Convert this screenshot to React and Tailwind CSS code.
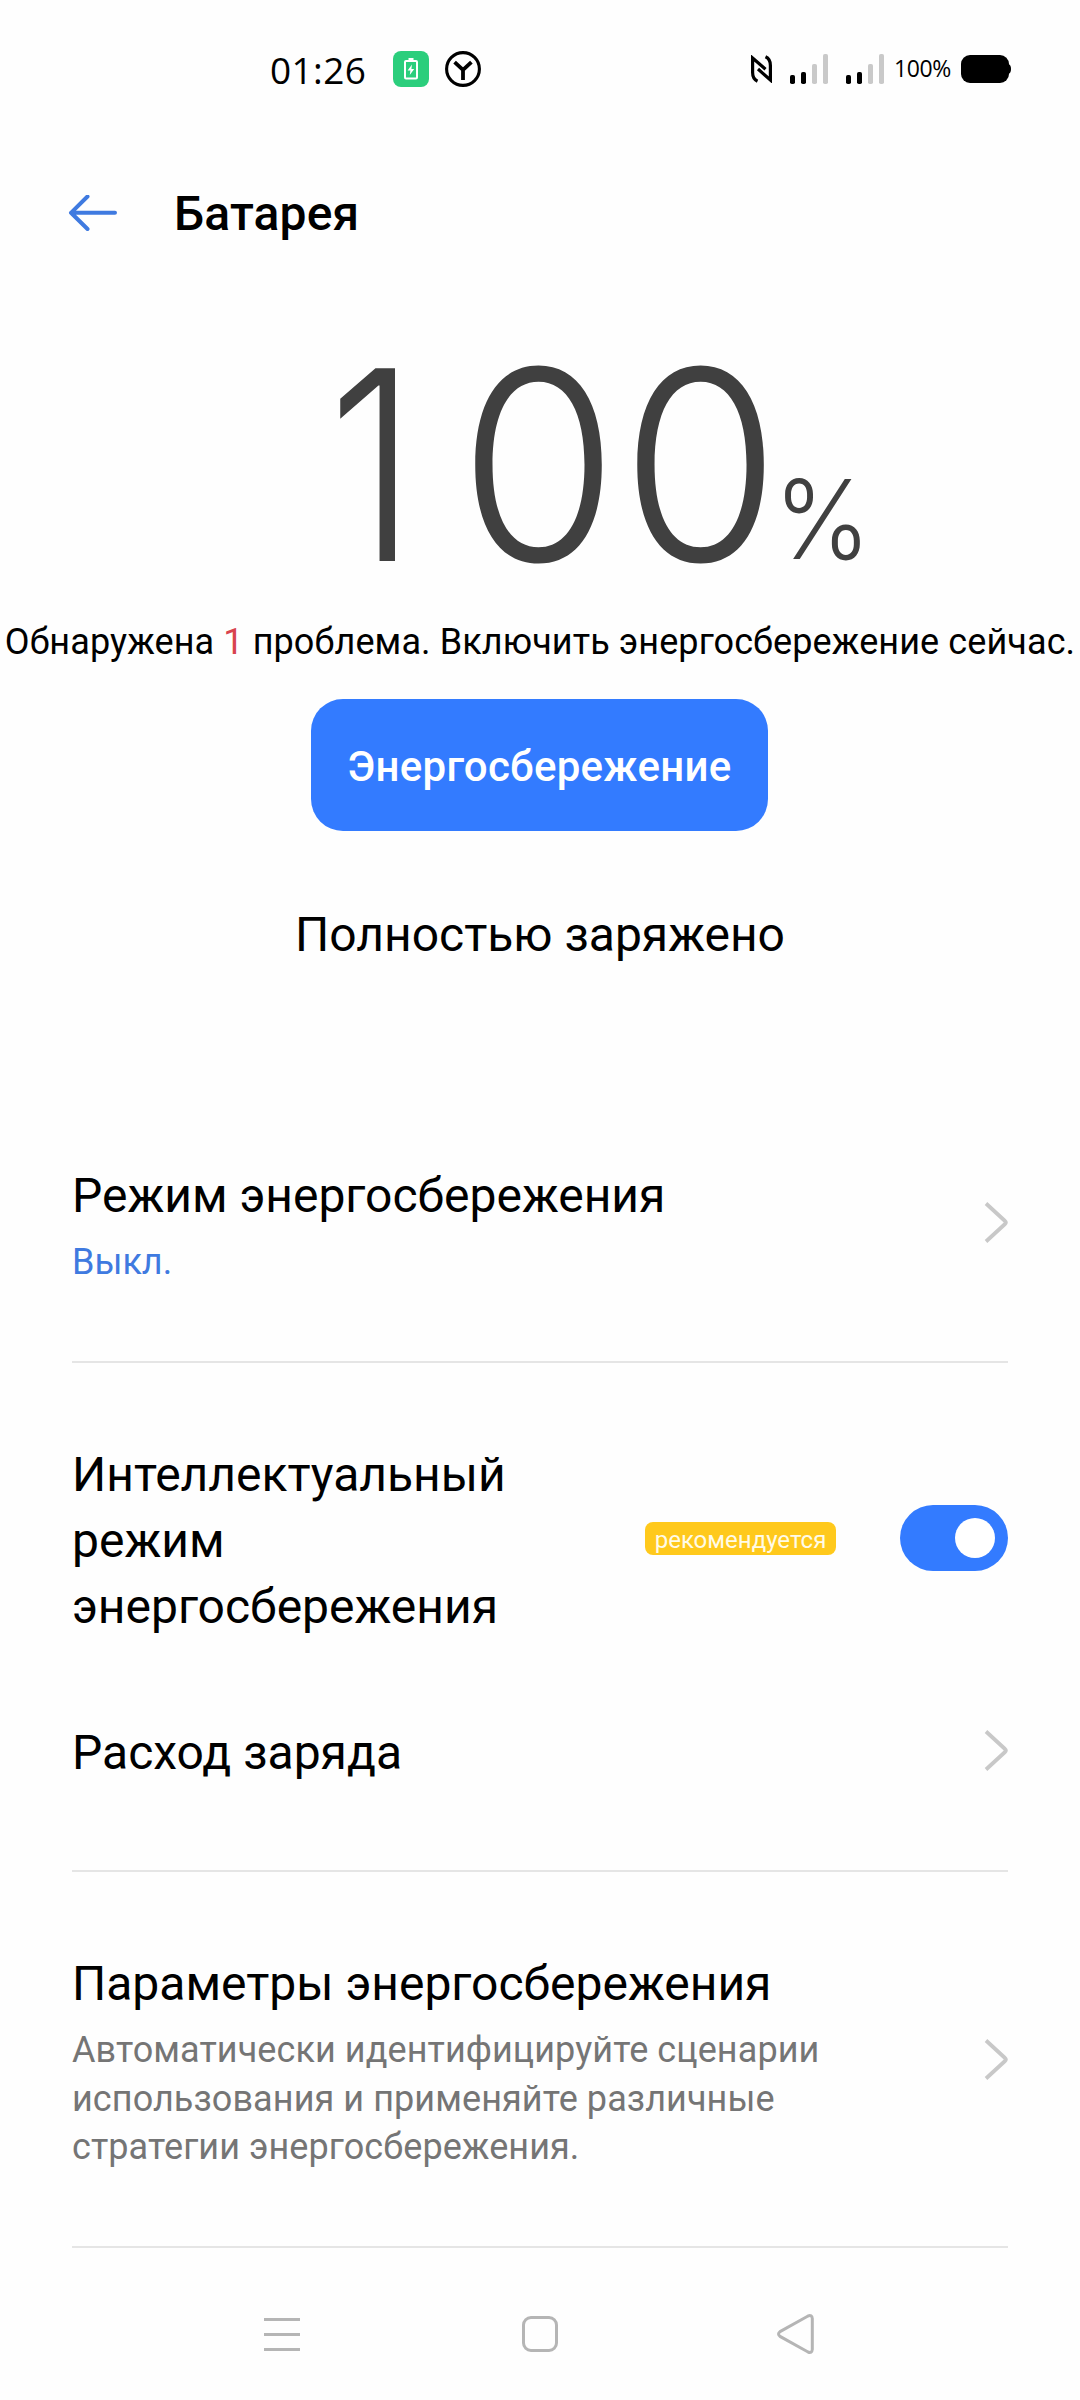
import { useState } from "react";

const SignalBars = () => (
  <svg width="38" height="30" viewBox="0 0 38 30">
    <rect x="0" y="21" width="5" height="9" rx="1.8" fill="#000" />
    <rect x="11" y="18" width="5" height="12" rx="1.8" fill="#000" />
    <rect x="22" y="10" width="5" height="20" rx="1.8" fill="#c9c9c9" />
    <rect x="33" y="0" width="5" height="30" rx="1.8" fill="#c9c9c9" />
  </svg>
);

const Chevron = () => (
  <svg className="mb-1 shrink-0" width="24" height="42" viewBox="0 0 24 42" fill="none">
    <path d="M2 1.500 L21 19 Q22.800 20.500 21 22 L2 39.500" stroke="#c8c8c8" strokeWidth="3.8" />
  </svg>
);

const StatusBar = () => (
  <div className="flex h-[138px] items-center pl-[270px] pr-[69px]">
    <span className="w-[123px] pt-0.5 font-['Open_Sans',sans-serif] text-[37px] leading-[48px] tracking-[0.4px]">
      01:26
    </span>
    <div className="flex items-center gap-4">
      <svg width="36" height="36" viewBox="0 0 36 36">
        <rect width="36" height="36" rx="8" fill="#2bce7c" />
        <rect x="15.5" y="7" width="5" height="4" fill="#fff" />
        <rect x="12" y="10" width="12" height="17.500" rx="1" fill="none" stroke="#fff" strokeWidth="2" />
        <path d="M19 13.5 L14.6 19.6 H17.4 L16.8 24 L21.2 18 H18.4 Z" fill="#fff" />
      </svg>
      <svg width="36" height="36" viewBox="0 0 36 36" fill="none" stroke="#000">
        <circle cx="18" cy="18" r="16.4" strokeWidth="3.1" />
        <path d="M9.6 11.2 L18 19 L26.4 11.2 M18 18.5 V29" strokeWidth="3.8" />
      </svg>
    </div>
    <div className="ml-auto flex items-center">
      <svg width="21" height="28" viewBox="0 0 21 28" fill="none" stroke="#000" strokeWidth="3.2">
        <path d="M6.5 26.2 Q1.6 24 1.6 17.5 V3 L14.5 14.2" />
        <path d="M14.5 1.8 Q19.4 4 19.4 10.5 V25 L7 14" />
      </svg>
      <div className="ml-[18px] flex gap-[18px]">
        <SignalBars />
        <SignalBars />
      </div>
      <span className="mb-0.5 ml-2.5 w-[67px] font-['Open_Sans',sans-serif] text-[23px] leading-6 tracking-[-0.4px]">
        100%
      </span>
      <svg width="50" height="28" viewBox="0 0 50 28">
        <rect width="48" height="28" rx="9" />
        <path d="M47 9 Q50 9.500 50 14 Q50 18.500 47 19 Z" />
      </svg>
    </div>
  </div>
);

const Header = () => (
  <header className="flex h-[152px] items-center pl-[68px]">
    <svg width="50" height="38" viewBox="0 0 50 38" fill="none" stroke="#3f7ae0" strokeWidth="4" strokeLinecap="round" strokeLinejoin="round">
      <path d="M19.500 1.500 L3 17.800 L19.500 34 M3 17.800 H47" />
    </svg>
    <h1 className="ml-14 text-5xl leading-[66px] font-medium tracking-[0.15px]">Батарея</h1>
  </header>
);

const Row = ({ title, children }) => (
  <div className="flex items-center justify-between">
    <div className="w-[780px]">
      <h2 className="text-5xl leading-[66px]">{title}</h2>
      {children}
    </div>
    <Chevron />
  </div>
);

const NavBar = () => (
  <nav className="flex h-[152px] items-center pt-5 pl-[264px]">
    <svg width="36" height="36" viewBox="0 0 36 36" fill="none" stroke="#b5b5b5" strokeWidth="3">
      <path d="M0 3.500 H36 M0 18.500 H36 M0 33.500 H36" />
    </svg>
    <svg className="ml-[222px]" width="36" height="36" viewBox="0 0 36 36" fill="none" stroke="#b5b5b5" strokeWidth="3">
      <rect x="1.500" y="1.500" width="33" height="33" rx="7.500" />
    </svg>
    <svg className="ml-[219px]" width="38" height="40" viewBox="0 0 38 40" fill="none" stroke="#b5b5b5" strokeWidth="3">
      <path d="M3 17.600 L31 2 Q35 0.500 35.300 4.500 V35.500 Q35 39.500 31 38 L3 22.400 Q0 20 3 17.600 Z" />
    </svg>
  </nav>
);

const BatterySettings = () => {
  const [smartMode, setSmartMode] = useState(true);

  return (
    <div className="min-h-[2400px] w-[1080px] overflow-hidden bg-[#fefefe] font-['Roboto',sans-serif] text-black">
      <StatusBar />
      <Header />

      {/* Charge level */}
      <div className="mt-[50px] flex h-[250px] items-baseline pl-[319px] font-['Inter',sans-serif] text-[#404040]">
        <span className="w-[455px] shrink-0 origin-left scale-x-[0.975] text-[265px] leading-[250px] font-[290] whitespace-nowrap">
          <span className="inline-block origin-left translate-x-[9px] scale-x-[0.875] font-[330] tracking-[39px]">1</span>
          <span className="tracking-[2.5px]">00</span>
        </span>
        <span className="origin-left -translate-y-0.5 scale-x-[0.94] text-[110px] leading-[120px] font-[270]">%</span>
      </div>

      <p className="mt-7 text-center text-4xl leading-[48px] tracking-[0.1px] whitespace-nowrap">
        Обнаружена <span className="text-[#d8434e]">1</span> проблема. Включить энергосбережение сейчас.
      </p>
      <button className="mt-[33px] ml-[311px] block h-[132px] w-[457px] rounded-[32px] bg-[#337bff] pt-[3px] text-[42px] font-medium tracking-[0.25px] text-white">
        Энергосбережение
      </button>
      <p className="mt-[71px] text-center text-5xl leading-[66px]">Полностью заряжено</p>

      {/* Settings list */}
      <div className="mt-[195px] px-[72px]">
        <div className="border-b-2 border-[#e5e5e5] pb-[75px]">
          <Row title="Режим энергосбережения">
            <p className="mt-[9px] text-4xl leading-[48px] text-[#3f7ae0]">Выкл.</p>
          </Row>
        </div>

        <div className="mt-[79px] flex items-center">
          <h2 className="w-[573px] pr-24 text-5xl leading-[66px]">Интеллектуальный режим энергосбережения</h2>
          <span className="mb-1.5 h-[33px] w-[191px] rounded-lg bg-[#ffc91c] pt-0.5 text-center text-2xl leading-[33px] text-[#fffbe8]">
            рекомендуется
          </span>
          <button
            onClick={() => setSmartMode(!smartMode)}
            className={`mb-1.5 ml-auto flex h-[66px] w-[108px] items-center rounded-full px-[13px] ${
              smartMode ? "justify-end bg-[#337bff]" : "justify-start bg-gray-300"
            }`}>
            <span className="size-10 rounded-full bg-white"></span>
          </button>
        </div>

        <div className="mt-20 border-b-2 border-[#e5e5e5] pb-[84px]">
          <Row title="Расход заряда" />
        </div>

        <div className="mt-[79px] border-b-2 border-[#e5e5e5] pb-[74px]">
          <Row title="Параметры энергосбережения">
            <p className="mt-[9px] text-4xl leading-[48.67px] tracking-[0.08px] text-[#757575]">
              Автоматически идентифицируйте сценарии использования и применяйте различные стратегии
              энергосбережения.
            </p>
          </Row>
        </div>
      </div>

      <NavBar />
    </div>
  );
};

export default BatterySettings;
